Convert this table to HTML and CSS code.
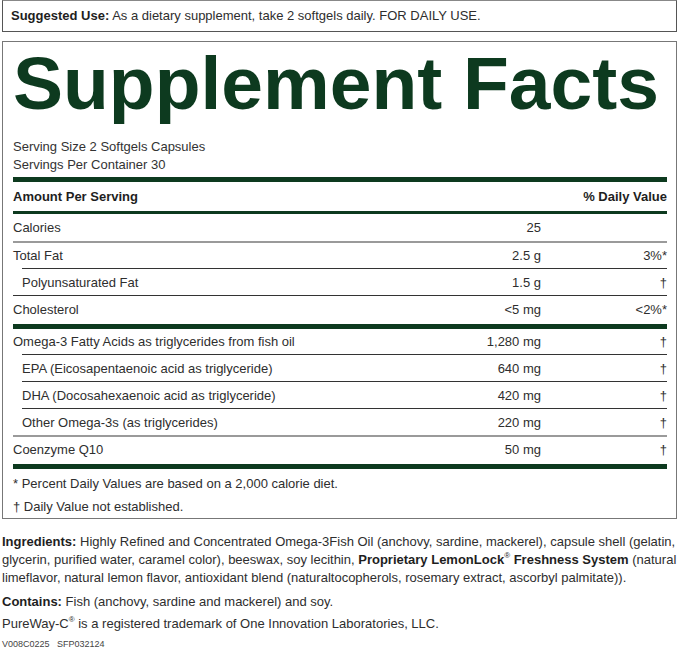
FILE: index.html
```html
<!DOCTYPE html>
<html>
<head>
<meta charset="utf-8">
<link rel="stylesheet" href="styles.css">
</head>
<body>
<div class="use-box"><b>Suggested Use:</b> As a dietary supplement, take 2 softgels daily. FOR DAILY USE.</div>
<div class="facts">
  <h1 class="title">Supplement Facts</h1>
  <div class="serving">Serving Size 2 Softgels Capsules</div>
  <div class="serving">Servings Per Container 30</div>
  <div class="bar"></div>
  <div class="row head"><span>Amount Per Serving</span><span></span><span class="dv">% Daily Value</span></div>
  <div class="row"><span>Calories</span><span class="amt">25</span><span class="dv"></span></div>
  <div class="row gray"><span>Total Fat</span><span class="amt">2.5 g</span><span class="dv">3%*</span></div>
  <div class="row sub"><span>Polyunsaturated Fat</span><span class="amt">1.5 g</span><span class="dv">†</span></div>
  <div class="row dark tall"><span>Cholesterol</span><span class="amt">&lt;5 mg</span><span class="dv">&lt;2%*</span></div>
  <div class="row thick"><span>Omega-3 Fatty Acids as triglycerides from fish oil</span><span class="amt">1,280 mg</span><span class="dv">†</span></div>
  <div class="row sub"><span>EPA (Eicosapentaenoic acid as triglyceride)</span><span class="amt">640 mg</span><span class="dv">†</span></div>
  <div class="row sub"><span>DHA (Docosahexaenoic acid as triglyceride)</span><span class="amt">420 mg</span><span class="dv">†</span></div>
  <div class="row sub"><span>Other Omega-3s (as triglycerides)</span><span class="amt">220 mg</span><span class="dv">†</span></div>
  <div class="row gray tall"><span>Coenzyme Q10</span><span class="amt">50 mg</span><span class="dv">†</span></div>
  <div class="bar bar-end"></div>
  <div class="note">* Percent Daily Values are based on a 2,000 calorie diet.</div>
  <div class="note">† Daily Value not established.</div>
</div>
<div class="info">
  <div class="ingr">
    <div class="ln"><b>Ingredients:</b> <span>Highly Refined and Concentrated Omega-3Fish Oil (anchovy, sardine, mackerel), capsule shell (gelatin,</span></div>
    <div class="ln"><span>glycerin, purified water, caramel color), beeswax, soy lecithin,</span> <b>Proprietary LemonLock<span class="reg">®</span> Freshness System</b> <span>(natural</span></div>
    <div class="ln"><span>limeflavor, natural lemon flavor, antioxidant blend (naturaltocopherols, rosemary extract, ascorbyl palmitate)).</span></div>
  </div>
  <div class="ln contains"><b>Contains:</b> <span>Fish (anchovy, sardine and mackerel) and soy.</span></div>
  <div class="ln tm"><span>PureWay-C</span><span class="reg">®</span> <span>is a registered trademark of One Innovation Laboratories, LLC.</span></div>
  <div class="code">V008C0225&nbsp;&nbsp;&nbsp;SFP032124</div>
</div>
</body>
</html>
```
FILE: styles.css
```css
html, body {
  margin: 0;
  padding: 0;
  background: #fff;
}
body {
  font-family: "Liberation Sans", Arial, sans-serif;
  font-size: 13px;
  color: #2e2e2e;
}
b {
  font-weight: 700;
  color: #1e1e1e;
}
.reg {
  font-size: 8px;
  vertical-align: text-top;
  line-height: 1;
  font-weight: 400;
}
.use-box {
  margin: 0 2px;
  height: 32px;
  line-height: 30px;
  border: 1px solid #555;
  border-top-color: #888;
  padding: 0 8px;
  box-sizing: border-box;
}
.facts {
  margin: 9px 2px 0 2px;
  border: 1px solid #777;
  padding: 4px 9px 0 10px;
  height: 478px;
  box-sizing: border-box;
}
.title {
  margin: 0;
  font-size: 75px;
  line-height: 75px;
  font-weight: 700;
  color: #0d3a1f;
  letter-spacing: 0;
}
.serving {
  line-height: 18px;
  color: #333;
}
.title + .serving {
  margin-top: 17px;
}
.bar {
  height: 5px;
  background: #0d3a1f;
  margin-top: 3px;
}
.row {
  display: grid;
  grid-template-columns: 1fr 120px 126px;
  height: 27px;
  align-items: center;
  box-sizing: border-box;
}
.row .amt, .row .dv {
  text-align: right;
}
.row.head {
  height: 32px;
  border-bottom: 3px solid #0d3a1f;
  font-weight: 700;
  color: #1e1e1e;
}
.row.gray {
  border-top: 2px solid #9a9a9a;
}
.row.dark {
  border-top: 1px solid #333;
}
.row.tall {
  height: 29px;
  padding-bottom: 2px;
}
.row.sub {
  border-top: 1px solid #333;
  margin-left: 9px;
}
.row.thick {
  border-top: 5px solid #0d3a1f;
  height: 30px;
}
.bar-end {
  margin-top: 0;
}
.note {
  line-height: 23px;
}
.bar-end + .note {
  margin-top: 3px;
}
.info {
  padding: 0 2px;
}
.ln {
  line-height: 18px;
  white-space: nowrap;
}
.ingr {
  margin-top: 14px;
}
.contains {
  margin-top: 6px;
}
.tm {
  margin-top: 4px;
}
.code {
  margin-top: 5px;
  font-size: 9px;
  line-height: 12px;
  color: #444;
}
```
